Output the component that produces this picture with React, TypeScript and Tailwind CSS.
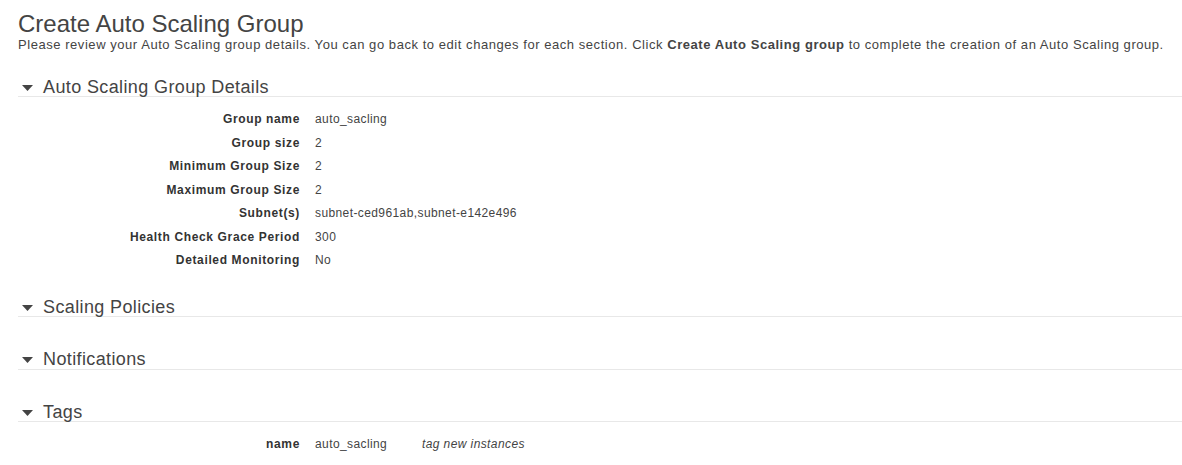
import React from "react";

const details = [
    { label: "Group name", value: "auto_sacling" },
    { label: "Group size", value: "2" },
    { label: "Minimum Group Size", value: "2" },
    { label: "Maximum Group Size", value: "2" },
    { label: "Subnet(s)", value: "subnet-ced961ab,subnet-e142e496" },
    { label: "Health Check Grace Period", value: "300" },
    { label: "Detailed Monitoring", value: "No" },
];

const Caret = () => (
    <svg width="11" height="6" viewBox="0 0 11 6" className="mr-[10px] ml-[4px] mt-[2px]">
        <path d="M0 0 L11 0 L5.5 6 Z" fill="#444" />
    </svg>
);

const Section = ({ title, children }: { title: string; children?: React.ReactNode }) => (
    <div className="mb-[21.5px]">
        <div className="flex items-center h-[20px] border-b border-[#e8e8e8]">
            <Caret />
            <h2 className="text-[18px] leading-[20px] tracking-[0.38px] text-[#444]">{title}</h2>
        </div>
        <div className="pt-[11px]">{children}</div>
    </div>
);

const Row = ({ label, children }: { label: string; children: React.ReactNode }) => (
    <div className="flex text-[12px] leading-[23.5px]">
        <div className="w-[282px] shrink-0 text-right font-bold tracking-[0.64px] text-[#333]">{label}</div>
        <div className="pl-[15px] tracking-[0.4px] text-[#444]">{children}</div>
    </div>
);

export default function App() {
    return (
        <div className="w-[1182px] h-[465px] bg-white pl-[18px] pt-[11px] text-[#444] font-['Liberation_Sans',Arial,sans-serif] overflow-hidden">
            <h1 className="text-[24px] leading-[26px] text-[#444]">Create Auto Scaling Group</h1>
            <p className="text-[13px] leading-[16px] tracking-[0.55px] whitespace-nowrap text-[#444]">
                Please review your Auto Scaling group details. You can go back to edit changes for each section. Click{" "}
                <b className="font-bold">Create Auto Scaling group</b> to complete the creation of an Auto Scaling group.
            </p>

            <div className="mt-[24px]">
                <Section title="Auto Scaling Group Details">
                    <div className="pb-[3px]">
                        {details.map((d) => (
                            <Row key={d.label} label={d.label}>
                                {d.value}
                            </Row>
                        ))}
                    </div>
                </Section>
                <Section title="Scaling Policies" />
                <Section title="Notifications" />
                <Section title="Tags">
                    <Row label="name">
                        <span className="inline-block w-[107px]">auto_sacling</span>
                        <span className="italic">tag new instances</span>
                    </Row>
                </Section>
            </div>
        </div>
    );
}
